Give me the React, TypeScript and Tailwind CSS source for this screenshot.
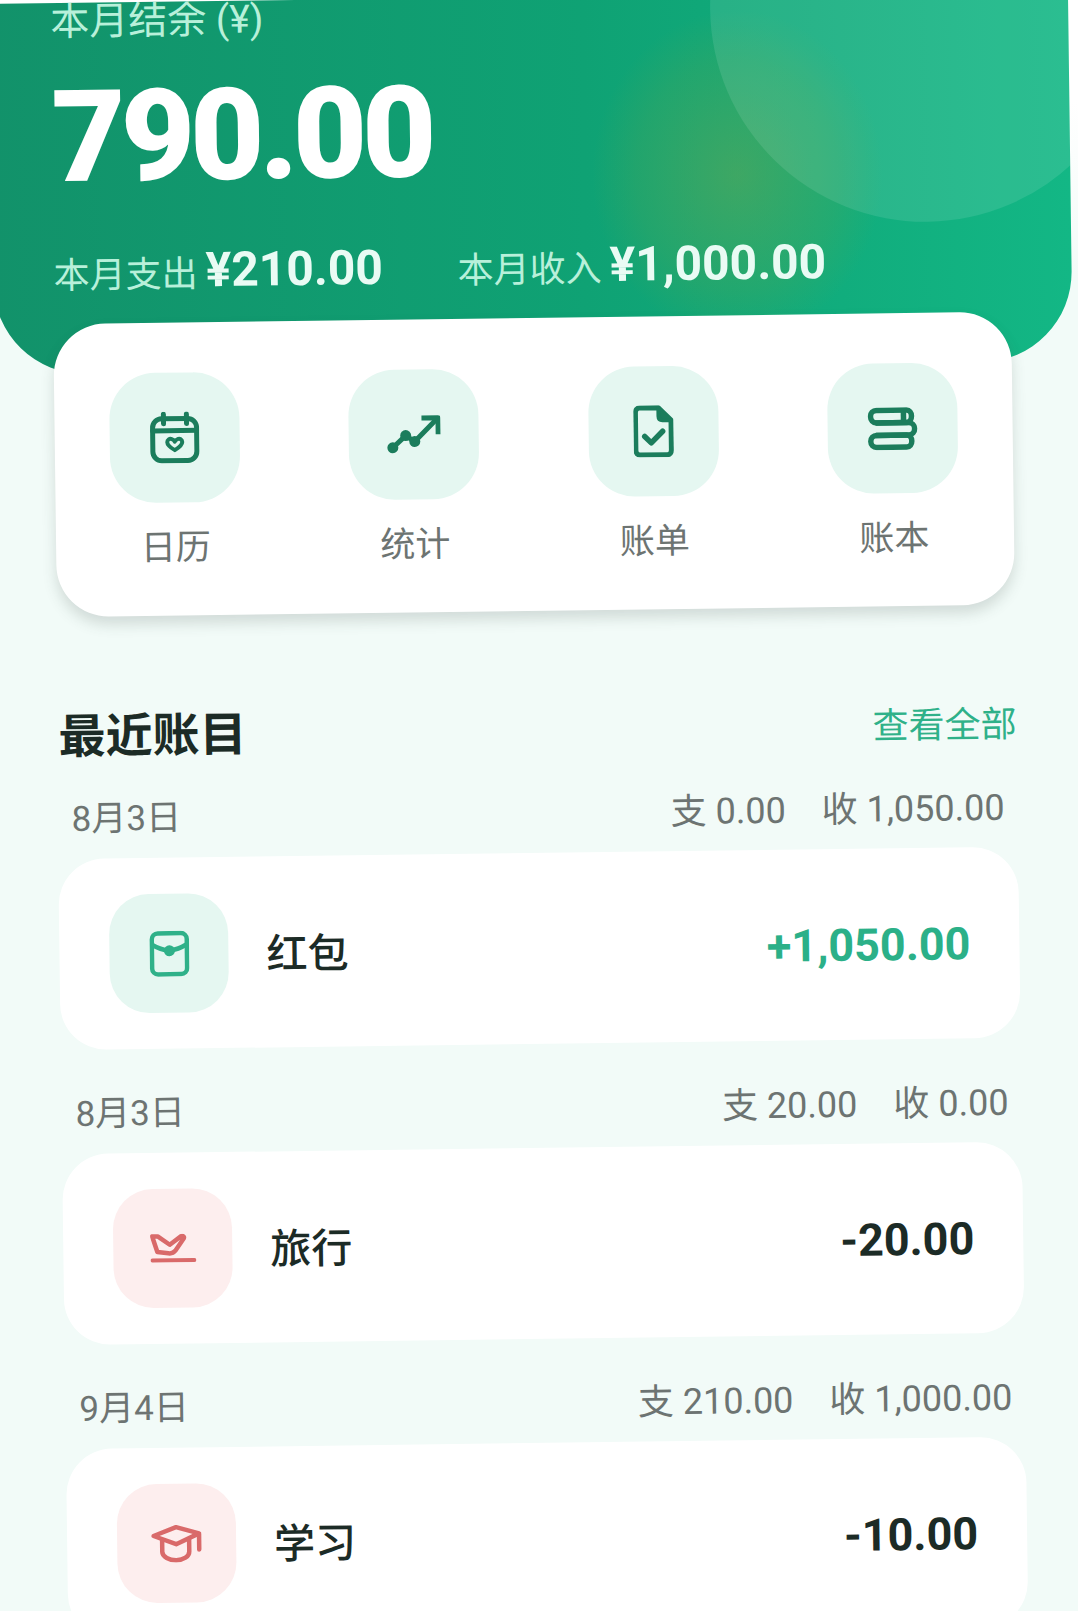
import React from "react";

const Calendar = () => (
  <svg width="50" height="52" viewBox="0 0 50 52" fill="none" stroke="#1b7d5c" strokeWidth="5" strokeLinecap="round" strokeLinejoin="round">
    <rect x="3" y="7" width="44" height="42" rx="9" />
    <path d="M3 19H47M14 2.5V12M37 2.5V12" />
    <path d="M25 38.5C20 35.5 17.5 33.5 17.5 30.5C17.5 28 20 26.5 22 27.5C23.5 28 24.5 29 25 30C25.5 29 26.5 28 28 27.5C30 26.5 32.5 28 32.5 30.5C32.5 33.5 30 35.5 25 38.5Z" strokeWidth="4" />
  </svg>
);

const Trend = () => (
  <svg width="54" height="40" viewBox="0 0 54 40" fill="none" stroke="#1b7d5c" strokeWidth="5" strokeLinejoin="round">
    <path d="M6 33L19 21L28 27L50 5" />
    <path d="M35 3.5H51.5V20" />
    <circle cx="6" cy="33" r="5.5" fill="#1b7d5c" stroke="none" />
    <circle cx="19" cy="21" r="5.5" fill="#1b7d5c" stroke="none" />
    <circle cx="28" cy="27" r="5.5" fill="#1b7d5c" stroke="none" />
  </svg>
);

const Doc = () => (
  <svg width="40" height="52" viewBox="0 0 40 52" fill="none" stroke="#1b7d5c" strokeWidth="5" strokeLinecap="round" strokeLinejoin="round">
    <path d="M6 2.5H25L37.5 15V45C37.5 47.5 36 49.5 33.5 49.5H6C3.5 49.5 2 47.5 2 45V7C2 4.5 3.5 2.5 6 2.5Z" />
    <path d="M25 3V11C25 13.5 26.5 15 29 15H37" fill="#1b7d5c" strokeWidth="4" />
    <path d="M11 31L17.5 37.5L29 26" strokeWidth="5.5" />
  </svg>
);

const Books = () => (
  <svg width="50" height="43" viewBox="0 0 50 43" fill="none" stroke="#1b7d5c" strokeWidth="5.5" strokeLinejoin="round">
    <path d="M9 3H39C42 3 44 5.5 44 9C44 12.5 42 15.5 39 15.5H9C5.5 15.5 3 12.5 3 9C3 5.5 5.5 3 9 3Z" />
    <path d="M36 3V15" />
    <path d="M8 15.5H41C44.5 15.5 47 18.5 47 21.5C47 25 44.5 28 41 28H8" />
    <path d="M9 28H39C42 28 44 30.5 44 34C44 37.5 42 40 39 40H9C5.5 40 3 37.5 3 34C3 30.5 5.5 28 9 28Z" />
  </svg>
);

const Packet = () => (
  <svg width="40" height="46" viewBox="0 0 40 46" fill="none" stroke="#2fb189" strokeWidth="4.5" strokeLinecap="round" strokeLinejoin="round">
    <rect x="2.5" y="2.5" width="35" height="41" rx="6" />
    <path d="M3 14C8 17 13 19 20 20C27 19 32 17 37 14" />
    <circle cx="20" cy="20" r="5.5" fill="#2fb189" stroke="none" />
  </svg>
);

const Plane = () => (
  <svg width="46" height="29" viewBox="0 0 46 29" fill="none" stroke="#d96a6a" strokeWidth="4.5" strokeLinecap="round" strokeLinejoin="round">
    <path d="M2 2.5H7.5L19.5 11L31 2.5C33 2 34.5 3 33.5 5L25 17C23 19.5 21 20 18 19.5L7 18Z" />
    <path d="M2 26.5H44" strokeWidth="4" />
  </svg>
);

const Cap = () => (
  <svg width="52" height="38" viewBox="0 0 52 38" fill="none" stroke="#d96a6a" strokeWidth="4.5" strokeLinecap="round" strokeLinejoin="round">
    <path d="M2.5 11L25 2.5L48 9L25 19.5Z" />
    <path d="M11 15V27C11 32 18 35.5 25 35.5C32 35.5 38 32 38 27V15" />
    <path d="M48 10V25" />
  </svg>
);

const quick = [
  { label: "日历", icon: <Calendar /> },
  { label: "统计", icon: <Trend /> },
  { label: "账单", icon: <Doc /> },
  { label: "账本", icon: <Books /> },
];

const rows = [
  { date: "8月3日", out: "支 0.00", inc: "收 1,050.00", name: "红包", amount: "+1,050.00", plus: true, icon: <Packet /> },
  { date: "8月3日", out: "支 20.00", inc: "收 0.00", name: "旅行", amount: "-20.00", plus: false, icon: <Plane /> },
  { date: "9月4日", out: "支 210.00", inc: "收 1,000.00", name: "学习", amount: "-10.00", plus: false, icon: <Cap /> },
];

export default function App() {
  return (
    <div className="w-[1078px] h-[1611px] overflow-hidden bg-[linear-gradient(#ffffff_0,#ffffff_100px,#f2fbf8_280px)] font-['Roboto','Noto_Sans_CJK_SC',sans-serif]">
      <div className="w-[1110px] -ml-2.5 mt-1 origin-top-left rotate-[-0.75deg]">
        <header className="relative w-[1078px] h-[371px] overflow-hidden rounded-b-[90px] bg-gradient-to-r from-[#12926a] via-[#0fa274] via-55% to-[#13b785]">
          <div className="absolute left-[600px] top-[16px] w-[290px] h-[330px] rounded-full bg-[radial-gradient(closest-side,rgba(125,165,70,0.42),rgba(90,165,80,0.24)_70%,rgba(90,170,80,0)_100%)]" />
          <div className="absolute left-[720px] top-[-200px] w-[430px] h-[430px] rounded-full bg-white/10" />
          <div className="relative pl-[60px]">
            <div className="h-[40px] -mt-[1px] text-[39px] leading-[40px] text-[#b8f0da]">本月结余 (¥)</div>
            <div className="mt-[31px] h-[128px] text-[128px] leading-[128px] font-black tracking-[-5px] text-white">790.00</div>
            <div className="mt-[44px] flex items-center">
              <div className="w-[404px] flex items-center">
                <span className="text-[36px] leading-[44px] mt-[9px] text-[#b8f0da]">本月支出</span>
                <span className="ml-[8px] text-[48px] leading-[44px] font-bold text-[#e9fbf4]">¥210.00</span>
              </div>
              <div className="flex items-center">
                <span className="text-[36px] leading-[44px] mt-[9px] text-[#b8f0da]">本月收入</span>
                <span className="ml-[8px] text-[48px] leading-[44px] font-bold text-[#e9fbf4]">¥1,000.00</span>
              </div>
            </div>
          </div>
        </header>

        <section className="relative ml-[59px] w-[958px] h-[293px] -mt-[50px] rounded-[52px] bg-white shadow-[0_8px_14px_rgba(60,80,70,0.18)] grid grid-cols-4 pt-[50px]">
          {quick.map((q) => (
            <div key={q.label} className="flex flex-col items-center">
              <div className="w-[130px] h-[130px] rounded-[46px] bg-[#e5f7f1] flex items-center justify-center">{q.icon}</div>
              <div className="mt-[28px] text-[35px] leading-[36px] text-[#6d7472]">{q.label}</div>
            </div>
          ))}
        </section>

        <div className="ml-[59px] w-[958px] mt-[90px] h-[60px] flex items-center justify-between">
          <h2 className="text-[47px] leading-[60px] font-semibold text-[#1c2b26]">最近账目</h2>
          <span className="text-[36px] leading-[60px] text-[#2fb189]">查看全部</span>
        </div>

        <div className="ml-[57px] w-[960px]">
          {rows.map((r) => (
            <div key={r.name} className="mt-[35px] [&:not(:first-child)]:mt-[47px]">
              <div className="h-[36px] mb-[21px] pl-[14px] pr-[13px] flex items-center justify-between text-[#6d7472]">
                <span className="text-[35px] leading-[36px]">{r.date}</span>
                <div className="flex gap-[36px] text-[36px] leading-[36px]">
                  <span>{r.out}</span>
                  <span>{r.inc}</span>
                </div>
              </div>
              <div className="h-[191px] rounded-[46px] bg-white flex items-center pl-[50px] pr-[49px]">
                <div className={`w-[119px] h-[119px] rounded-[40px] flex items-center justify-center ${r.plus ? "bg-[#e5f7f1]" : "bg-[#fdeeee]"}`}>{r.icon}</div>
                <span className="ml-[38px] mt-[4px] text-[41px] leading-[48px] font-medium text-[#1c2b26]">{r.name}</span>
                <span className={`ml-auto mt-[3px] text-[45px] leading-[48px] font-bold ${r.plus ? "text-[#2bb088]" : "text-[#1c2b26]"}`}>{r.amount}</span>
              </div>
            </div>
          ))}
        </div>
      </div>
    </div>
  );
}
